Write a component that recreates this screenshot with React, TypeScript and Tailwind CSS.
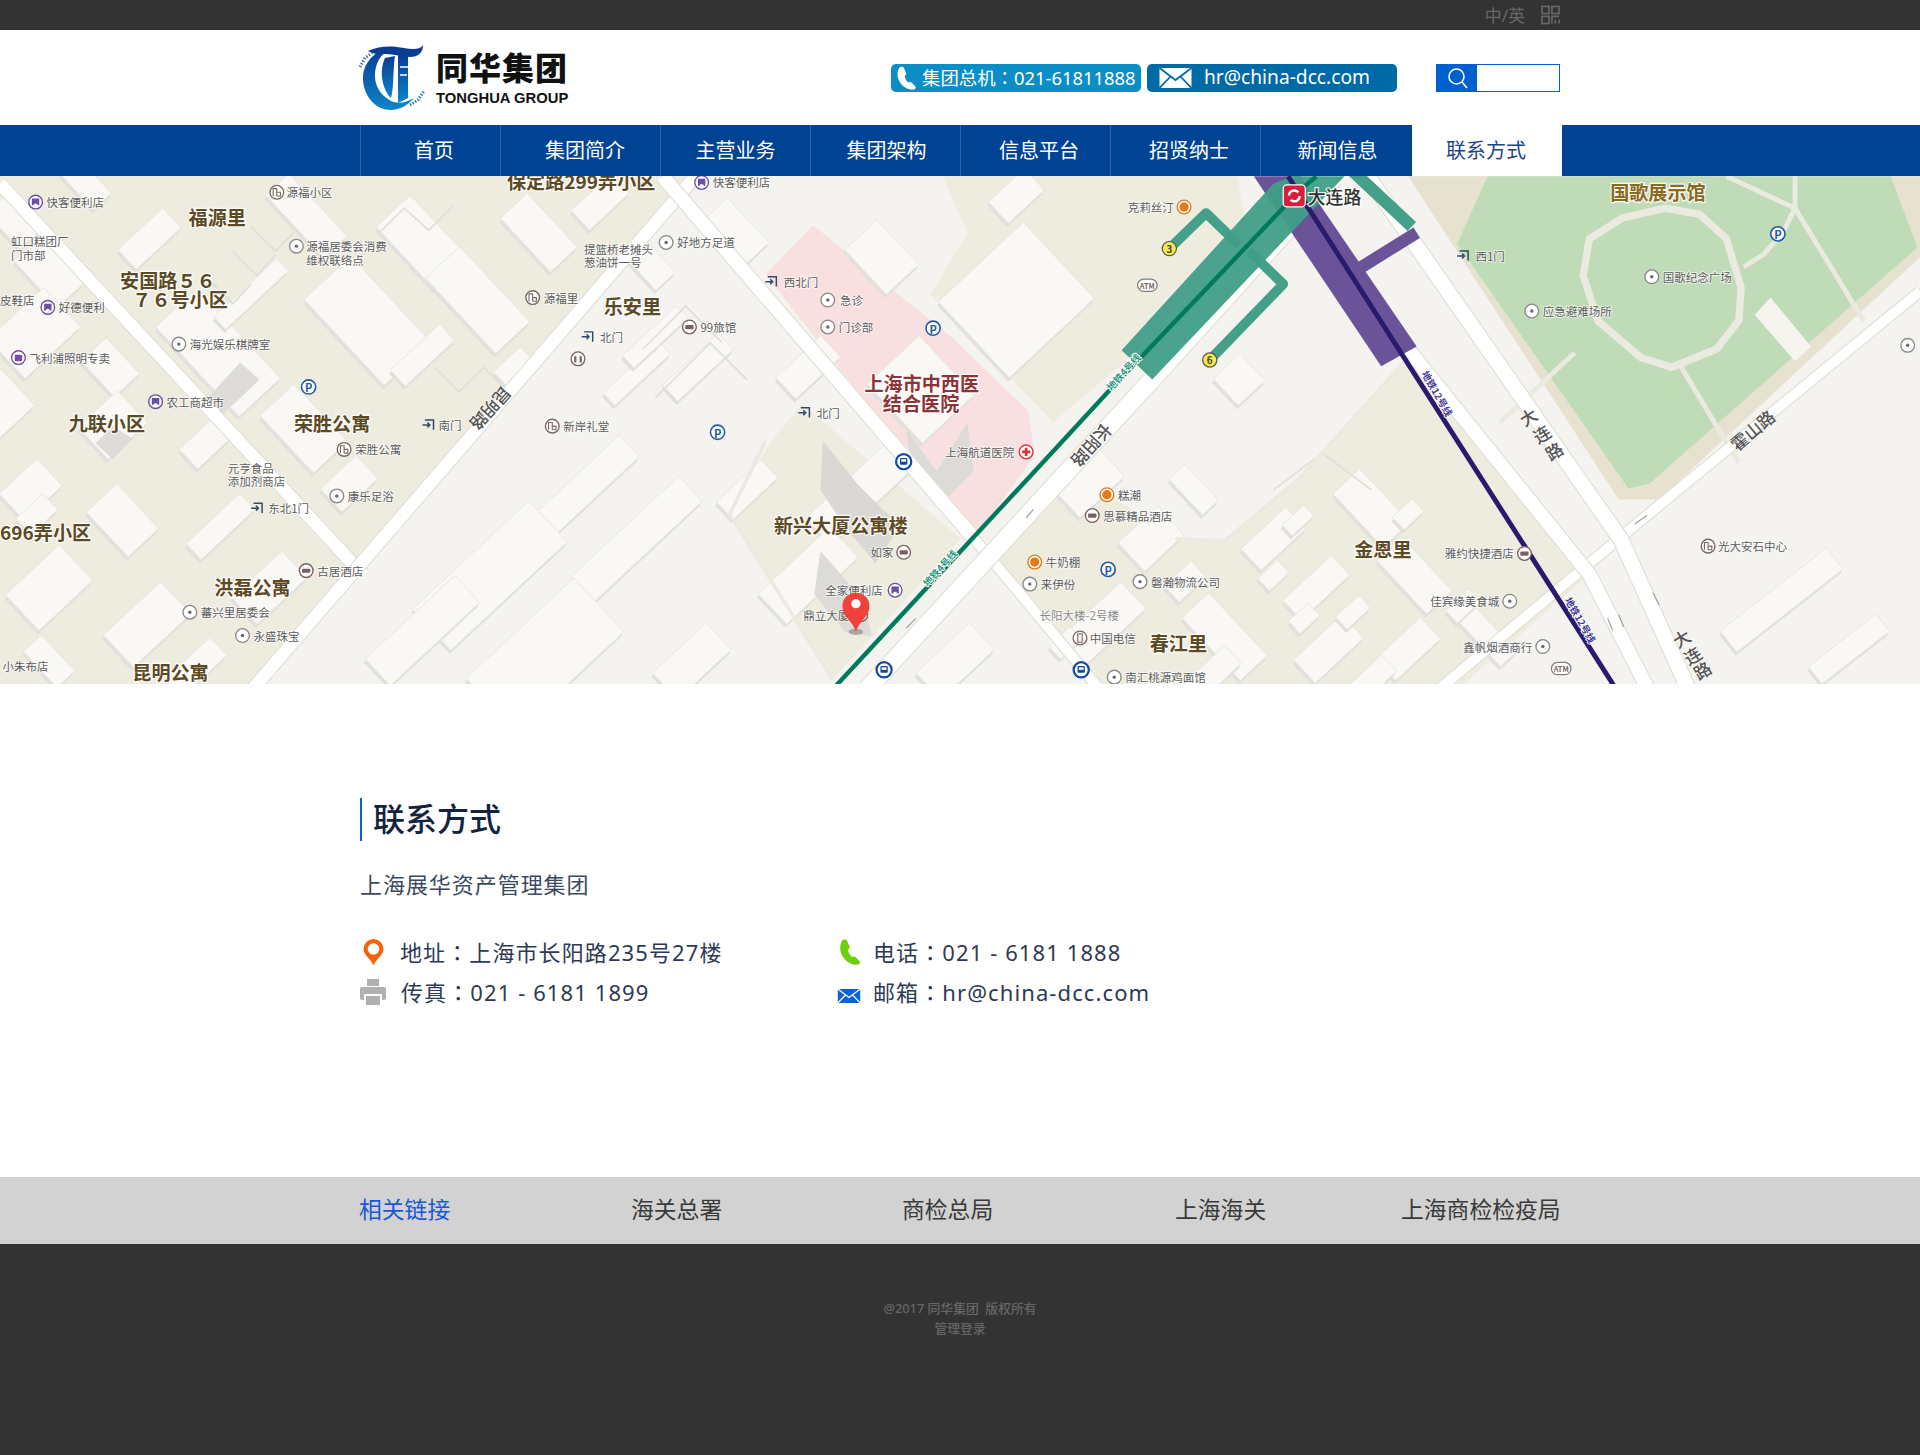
import React from "react";

type Pt = [number, number];
const poly = (p: Pt[]) => p.map((q) => q.join(",")).join(" ");

const tan: Pt[][] = [
  [[0, 143], [568, 144], [206, 563], [0, 563]],
  [[655, 330], [630, 360], [595, 420], [680, 555], [785, 440]],
  [[770, 144], [1010, 144], [1020, 190], [925, 290], [860, 345], [760, 240], [790, 190]],
  [[810, 450], [885, 390], [960, 440], [1000, 440], [1060, 390], [1150, 290], [1298, 469], [1190, 563], [905, 563]],
];

const buildings: [number, number, number, number, number][] = [
  [12, 180, 40, 26, 47], [40, 222, 52, 30, 47], [28, 272, 62, 44, -43], [0, 330, 40, 40, 47], [90, 300, 40, 28, 47],
  [178, 288, 100, 46, 47], [122, 195, 50, 22, -43], [70, 150, 40, 20, 47], [250, 176, 70, 26, 47], [205, 240, 70, 14, -43],
  [300, 262, 96, 52, 47], [345, 198, 70, 38, 47], [390, 245, 84, 38, 47], [440, 190, 60, 30, 47], [490, 165, 44, 22, -43],
  [345, 290, 55, 18, -43], [420, 300, 30, 18, -43], [248, 350, 64, 38, 47], [285, 395, 40, 26, -43], [170, 360, 44, 22, -43],
  [92, 347, 44, 36, -43], [25, 400, 42, 30, -43], [40, 480, 60, 40, -43], [100, 425, 50, 34, 47], [180, 430, 60, 18, -43],
  [220, 480, 56, 30, -43], [40, 540, 40, 20, 47], [160, 545, 50, 20, -43], [120, 510, 64, 36, -43], [600, 190, 50, 30, 47],
  [530, 215, 40, 22, 47], [520, 305, 62, 14, -43], [570, 300, 62, 18, -43], [535, 275, 60, 14, -43], [470, 405, 24, 120, 47],
  [520, 440, 28, 120, 47], [400, 470, 46, 130, 47], [345, 515, 30, 100, 47], [445, 535, 60, 120, 47], [565, 540, 60, 30, -43],
  [610, 400, 20, 50, 47], [30, 420, 30, 18, -43], [705, 400, 30, 100, 47], [660, 470, 34, 80, 47], [830, 245, 95, 85, -43],
  [720, 210, 50, 36, 47], [660, 300, 50, 24, -43], [752, 318, 58, 66, -43], [830, 160, 40, 24, -43], [1012, 310, 30, 30, -43],
  [890, 395, 30, 50, 47], [940, 440, 44, 32, -43], [1040, 440, 50, 24, -43], [1075, 480, 54, 22, -43], [1120, 415, 60, 30, 47],
  [1085, 530, 54, 26, -43], [1155, 470, 60, 28, 47], [1150, 530, 50, 24, -43], [900, 510, 30, 70, 47], [1000, 520, 70, 30, 47],
  [985, 555, 60, 20, -43], [1215, 520, 50, 18, 47], [780, 540, 60, 30, -43], [1455, 490, 22, 110, 52], [1510, 530, 18, 70, 52],
  [1040, 470, 22, 14, -43], [1065, 505, 22, 14, -43], [1105, 500, 26, 14, -43], [1120, 555, 40, 18, -43], [1060, 425, 24, 12, -43],
  [1150, 420, 22, 14, -43], [1195, 495, 26, 14, -43], [968, 475, 30, 18, -43], [975, 400, 40, 18, 47], [870, 525, 24, 14, -43],
];

const big: [string, number, number, string?, number?][] = [
  ["保定路299弄小区", 414, 147.5], ["福源里", 154, 177.5], ["安国路５６", 98, 228.5], ["７６号小区", 108, 244.5], ["乐安里", 493, 249.5],
  ["九联小区", 56, 345.5], ["荣胜公寓", 240, 345.5], ["696弄小区", 0, 434.5], ["洪磊公寓", 175, 479.5], ["昆明公寓", 108, 548.5],
  ["新兴大厦公寓楼", 632, 428.5], ["春江里", 939, 525.5], ["金恩里", 1106, 448.5], ["国歌展示馆", 1315, 156.5, "#8a6a1f"],
  ["上海市中西医", 706, 312.5, "#8c3338"], ["结合医院", 721, 329.5, "#8c3338"], ["大连路", 1068, 160, "#333333", 14.6],
];

type Kind = "dot" | "shop" | "home" | "hotel" | "cup" | "door" | "none" | "tel" | "red" | "bag" | "wc";
const pois: [string, number, number, Kind, number?][] = [
  ["快客便利店", 38, 165, "shop", 29], ["源福小区", 234, 157, "home", 226], ["虹口糕团厂", 9, 197, "none"], ["门市部", 9, 208, "none"],
  ["源福居委会消费", 250, 201, "dot", 242], ["维权联络点", 250, 212, "none"], ["提篮桥老摊头", 477, 203, "none"], ["葱油饼一号", 477, 214, "none"],
  ["好地方足道", 553, 198, "dot", 544], ["快客便利店", 582, 149, "shop", 573], ["皮鞋店", 0, 245, "none"], ["好德便利", 48, 251, "shop", 39],
  ["海光娱乐棋牌室", 155, 281, "dot", 146], ["飞利浦照明专卖", 24, 292, "bag", 15], ["农工商超市", 136, 328, "shop", 127], ["源福里", 444, 243, "home", 435],
  ["北门", 490, 275, "door", 480], ["南门", 358, 347, "door", 350], ["东北1门", 219, 415, "door", 210], ["新岸礼堂", 460, 348, "home", 451],
  ["荣胜公寓", 290, 367, "home", 281], ["元亨食品", 186, 382, "none"], ["添加剂商店", 186, 393, "none"], ["康乐足浴", 284, 405, "dot", 275],
  ["古居酒店", 259, 466, "hotel", 250], ["蕃兴里居委会", 164, 500, "dot", 155], ["永盛珠宝", 207, 519, "dot", 198], ["小朱布店", 2, 544, "none"],
  ["99旅馆", 572, 267, "hotel", 563], ["西北门", 640, 230, "door", 630], ["急诊", 686, 245, "dot", 676], ["门诊部", 685, 267, "dot", 676],
  ["北门", 667, 337, "door", 657], ["上海航道医院", 772, 369, "red", 838], ["克莉丝汀", 921, 169, "cup", 967], ["糕潮", 913, 404, "cup", 904],
  ["思慕精品酒店", 901, 421, "hotel", 892], ["牛奶棚", 854, 459, "cup", 845], ["来伊份", 850, 477, "dot", 841], ["磐瀚物流公司", 940, 475, "dot", 931],
  ["长阳大楼-2号楼", 849, 502, "none"], ["中国电信", 890, 521, "tel", 882], ["南汇桃源鸡面馆", 919, 553, "dot", 910], ["如家", 711, 451, "hotel", 738],
  ["全家便利店", 674, 482, "shop", 731], ["鼎立大厦", 656, 502, "hotel", 703], ["西1门", 1205, 209, "door", 1195], ["国歌纪念广场", 1358, 226, "dot", 1349],
  ["应急避难场所", 1260, 254, "dot", 1251], ["光大安石中心", 1403, 446, "home", 1395], ["雅约快捷酒店", 1180, 452, "hotel", 1245],
  ["佳宾缘美食城", 1168, 491, "dot", 1233], ["鑫帆烟酒商行", 1195, 528, "dot", 1260], ["", 0, 0, "wc", 472], ["", 0, 0, "dot", 1558],
];
const wcY = 293;
const edgeY = 282;

function PoiIcon({ k, x, y }: { k: Kind; x: number; y: number }) {
  if (k === "none") return null;
  if (k === "door")
    return (
      <g fill="none" stroke="#2f4a6b" strokeWidth="1.2">
        <path d={`M${x - 3} ${y - 4}H${x + 4}V${y + 4}`} />
        <path d={`M${x - 5} ${y}H${x + 1}M${x - 1} ${y - 2}L${x + 1} ${y}L${x - 1} ${y + 2}`} />
      </g>
    );
  const ring: Record<string, string> = { dot: "#8a8a8a", shop: "#6a4fa8", home: "#7a6660", hotel: "#7a5f5f", cup: "#e07b1a", tel: "#7a6660", red: "#d8343c", bag: "#7b4aa8", wc: "#7a6660" };
  const c = ring[k];
  return (
    <g>
      <circle cx={x} cy={y} r="5.6" fill="#ffffff" stroke={c} strokeWidth="1.1" />
      {k === "dot" && <circle cx={x} cy={y} r="1.4" fill="#6b6b6b" />}
      {k === "shop" && <path d={`M${x - 3} ${y - 3}H${x + 3}V${y + 3}L${x} ${y + 1}L${x - 3} ${y + 3}Z`} fill={c} />}
      {k === "home" && <path d={`M${x - 3} ${y + 3}V${y - 3}H${x}V${y + 3}M${x} ${y + 3}H${x + 3}V${y}H${x}`} fill="none" stroke={c} strokeWidth="0.9" />}
      {k === "hotel" && <rect x={x - 3.4} y={y - 1.6} width="6.8" height="3.4" fill={c} rx="0.8" />}
      {k === "cup" && <circle cx={x} cy={y} r="3.8" fill={c} />}
      {k === "tel" && <rect x={x - 1.8} y={y - 3.4} width="3.6" height="6.8" fill="none" stroke={c} strokeWidth="0.9" />}
      {k === "red" && <path d={`M${x - 3.4} ${y}H${x + 3.4}M${x} ${y - 3.4}V${y + 3.4}`} stroke={c} strokeWidth="2.2" />}
      {k === "bag" && <rect x={x - 3} y={y - 2.4} width="6" height="5.4" fill={c} rx="1" />}
      {k === "wc" && <path d={`M${x - 2.2} ${y - 2}V${y + 3}M${x + 2.2} ${y - 2}V${y + 3}`} stroke={c} strokeWidth="1.8" />}
    </g>
  );
}

function CityMap() {
  const road = (d: string, w: number, key: string) => (
    <g key={key} fill="none" strokeLinejoin="round">
      <path d={d} stroke="#e2e0d6" strokeWidth={w + 2} />
      <path d={d} stroke="#ffffff" strokeWidth={w} />
    </g>
  );
  return (
    <svg viewBox="0 143.7 1568 414.9" width="1920" height="508" className="block" fontFamily="'Noto Sans CJK SC', sans-serif">
      <rect x="0" y="143" width="1568" height="420" fill="#f4f3ef" />
      {tan.map((p, i) => (
        <polygon key={i} points={poly(p)} fill="#eeecdf" />
      ))}
      <polygon points="664,184 625,224 794,438 812,418 845,372 840,336 778,276" fill="#f8e0e1" />
      {/* park */}
      <polygon points="1150,144 1215,144 1568,144 1568,210 1355,408 1322,408" fill="#e6e2cf" />
      <polygon points="1215,144 1544,144 1566,202 1347,395 1330,399 1190,199" fill="#c0dbb7" />
      <g fill="none" stroke="#ebeae1" strokeWidth="6" strokeLinejoin="round">
        <path d="M1360 170 L1388 175 L1410 195 L1422 235 L1420 262 L1402 285 L1365 300 L1340 292 L1305 262 L1293 225 L1298 195 L1325 178 Z" />
        <path d="M1286 288 L1225 345" strokeWidth="4" />
        <path d="M1372 298 L1420 378" strokeWidth="4" />
        <path d="M1424 218 L1440 208 L1456 190 L1466 170 L1466 144" strokeWidth="4" />
        <path d="M1466 170 L1522 262" strokeWidth="4" />
        <path d="M1410 144 L1466 170" strokeWidth="4" />
      </g>
      <polygon points="1433,257 1446,243 1479,283 1466,295" fill="#f5f4ee" />
      {/* buildings */}
      {buildings.map(([x, y, w, h, a], i) => (
        <g key={i} transform={`translate(${x} ${y}) rotate(${a})`}>
          <rect x={-w / 2} y={-h / 2} width={w} height={h} fill="#e1e0dc" transform={`rotate(${-a}) translate(-1 3) rotate(${a})`} />
          <rect x={-w / 2} y={-h / 2} width={w} height={h} fill="#f9f8f5" stroke="#e7e6de" strokeWidth="0.7" />
        </g>
      ))}
      <polygon points="672,360 700,395 735,430 715,460 690,430 670,400" fill="#d9d8d5" />
      <polygon points="670,450 705,490 712,520 690,516 665,485" fill="#dcdbd7" />
      <polygon points="740,350 765,385 790,345 795,385 770,410 745,385" fill="#dcdbd7" />
      <polygon points="165,330 196,296 212,310 175,345" fill="#dddcd8" />
      <polygon points="78,362 92,375 108,358 92,348" fill="#dddcd8" />
      {/* comb outlines */}
      <g fill="none" stroke="#e0dfd5" strokeWidth="1.4">
        <path d="M172 230L190 248L205 232M190 205L210 225L225 208M205 185L225 205L240 190" />
        <path d="M310 190L330 170L350 188L370 168M355 300L375 320L395 300L415 320" />
        <path d="M525 285L560 250L590 280M535 325L580 280L610 310M1040 400L1080 370L1120 400" />
      </g>
      {/* roads */}
      {road("M0 150 L297 470", 10, "c")}
      {road("M206 563 L568 144", 10, "b")}
      {road("M541 144 L794 438", 11, "d1")}
      {road("M794 438 L898 563", 8, "d2")}
      {road("M708 563 L950 300 L1090 145", 14, "a")}
      {road("M1568 238 L1340 425 L1175 563", 8, "h")}
      {road("M1117 144 L1324 441 L1379 563", 12, "e1")}
      {road("M1149 284 L1298 469 L1346 563", 11, "e2")}
      <g fill="none" stroke="#ebe9e0" strokeWidth="3">
        <path d="M625 360 L596 420 L680 555" />
        <path d="M960 440 L1000 442 L1060 392 L1150 292" />
      </g>
      {/* metro stations */}
      <polygon points="1024,144 1062,144 1157,283 1128,299" fill="#6b5399" />
      <path d="M1112 218 L1157 190" stroke="#6b5399" strokeWidth="10" />
      <g fill="none" stroke="#44a088" strokeWidth="8" strokeLinejoin="round">
        <path d="M955 203 L985 174 L1012 200" />
        <path d="M988 294 L1048 232 L1020 205" />
        <path d="M1105 140 L1153 185" strokeWidth="10" />
      </g>
      <polygon points="916,286 1040,150 1055,144 1098,144 941,310" fill="#409e87" fillOpacity="0.95" />
      <path d="M680 563 L905 320 L1062 155 L1075 144" fill="none" stroke="#007a5c" strokeWidth="3.6" />
      <path d="M1052 144 L1320 563" fill="none" stroke="#2a1a6e" strokeWidth="4" />
      <g fontSize="8" fontWeight="700">
        <text transform="translate(920 306) rotate(-48)" textAnchor="middle" fill="#2c9a80" stroke="#fff" strokeWidth="1.5" paintOrder="stroke">地铁4号线</text>
        <text transform="translate(770 466) rotate(-48)" textAnchor="middle" fill="#2c9a80" stroke="#fff" strokeWidth="1.5" paintOrder="stroke">地铁4号线</text>
        <text transform="translate(1171 323) rotate(60)" textAnchor="middle" fill="#4a3a9a" stroke="#fff" strokeWidth="1.5" paintOrder="stroke">地铁12号线</text>
        <text transform="translate(1288 508) rotate(60)" textAnchor="middle" fill="#4a3a9a" stroke="#fff" strokeWidth="1.5" paintOrder="stroke">地铁12号线</text>
      </g>
      {/* road names */}
      <g fill="#555555" fontSize="14" fontWeight="500" stroke="#ffffff" strokeWidth="0.6" paintOrder="stroke">
        <text transform="translate(892 364) rotate(132)" textAnchor="middle" dominantBaseline="central">长阳路</text>
        <text transform="translate(401 334) rotate(132)" textAnchor="middle" dominantBaseline="central">昆明路</text>
        <text transform="translate(1431 351) rotate(-40)" textAnchor="middle" dominantBaseline="central">霍山路</text>
        <text transform="translate(1248 340) rotate(-32)" textAnchor="middle" dominantBaseline="central">大</text>
        <text transform="translate(1259 354) rotate(-32)" textAnchor="middle" dominantBaseline="central">连</text>
        <text transform="translate(1269 368) rotate(-32)" textAnchor="middle" dominantBaseline="central">路</text>
        <text transform="translate(1373 521) rotate(-32)" textAnchor="middle" dominantBaseline="central">大</text>
        <text transform="translate(1382 535) rotate(-32)" textAnchor="middle" dominantBaseline="central">连</text>
        <text transform="translate(1390 547) rotate(-32)" textAnchor="middle" dominantBaseline="central">路</text>
      </g>
      {/* small arrows */}
      <g stroke="#a0a0a0" strokeWidth="1" fill="none">
        <path d="M1335 428 L1345 421 M1350 484 L1355 494 M1313 505 L1317 515 M1322 502 L1326 512 M838 423 L844 416 M740 513 L748 505" />
      </g>
      {/* labels */}
      {pois.map(([t, x, y, k, ix], i) => (
        <g key={i}>
          {t && (
            <text x={x} y={y} dominantBaseline="central" fontSize="9.4" fill={t.startsWith("长阳") ? "#8a8a8a" : "#5c5c5c"} stroke="#ffffff" strokeWidth="1.4" strokeOpacity="0.7" paintOrder="stroke">
              {t}
            </text>
          )}
          {ix !== undefined && <PoiIcon k={k} x={ix} y={!t ? (k === "wc" ? wcY : edgeY) : y} />}
        </g>
      ))}
      {big.map(([t, x, y, c, s], i) => (
        <text key={i} x={x} y={y} dominantBaseline="central" fontSize={s ?? 15.6} fontWeight={s ? 500 : 700} fill={c ?? "#5c4a24"} stroke="#ffffff" strokeWidth="2" strokeOpacity="0.85" paintOrder="stroke">
          {t}
        </text>
      ))}
      {/* parking, bus, ATM, metro marks */}
      {([[252, 316], [586, 353], [762, 268], [905, 465], [1452, 191]] as Pt[]).map(([x, y], i) => (
        <g key={i}>
          <circle cx={x} cy={y} r="5.8" fill="#ffffff" stroke="#1e5aa8" strokeWidth="1.3" />
          <text x={x} y={y + 0.3} fontSize="9" fontWeight="700" textAnchor="middle" dominantBaseline="central" fill="#1e5aa8">P</text>
        </g>
      ))}
      {([[738, 377], [722, 547], [883, 547]] as Pt[]).map(([x, y], i) => (
        <g key={i}>
          <circle cx={x} cy={y} r="6.2" fill="#ffffff" stroke="#114a9e" strokeWidth="1.8" />
          <rect x={x - 3} y={y - 3} width="6" height="5.5" rx="1" fill="#114a9e" />
          <rect x={x - 2} y={y - 2} width="4" height="2" fill="#ffffff" />
        </g>
      ))}
      {([[937, 233], [1275, 546]] as Pt[]).map(([x, y], i) => (
        <g key={i}>
          <rect x={x - 8} y={y - 5} width="16" height="10" rx="5" fill="#ffffff" stroke="#8a7a78" strokeWidth="1" />
          <text x={x} y={y + 0.3} fontSize="6" fontWeight="700" textAnchor="middle" dominantBaseline="central" fill="#7a6660">ATM</text>
        </g>
      ))}
      {([[955, 203, "3"], [988, 294, "6"]] as [number, number, string][]).map(([x, y, t]) => (
        <g key={t}>
          <circle cx={x} cy={y} r="5.8" fill="#f4e94a" stroke="#555" strokeWidth="1" />
          <text x={x} y={y + 0.3} fontSize="8" fontWeight="700" textAnchor="middle" dominantBaseline="central" fill="#444">{t}</text>
        </g>
      ))}
      <rect x="1048" y="151" width="18" height="18" rx="3" fill="#d81e3a" stroke="#fff" strokeWidth="1" />
      <circle cx="1057" cy="160" r="4.4" fill="none" stroke="#fff" strokeWidth="2" strokeDasharray="10 3.8" />
      {/* pin */}
      <ellipse cx="699" cy="516" rx="6" ry="2.5" fill="#000" fillOpacity="0.25" />
      <path d="M699 516 C696 506 688 504 688 495 A11 11 0 0 1 710 495 C710 504 702 506 699 516 Z" fill="#f2413a" />
      <circle cx="699" cy="493" r="3.8" fill="#fff" />
    </svg>
  );
}

function Logo() {
  return (
    <svg width="70" height="68" viewBox="0 -1 70 68" className="-ml-[2px] block">
      <defs>
        <linearGradient id="lg" x1="0" y1="0" x2="0" y2="1">
          <stop offset="0" stopColor="#0b3c94" />
          <stop offset="1" stopColor="#0a86c9" />
        </linearGradient>
      </defs>
      <path d="M26 4C12 10 4 22 5 35C6 52 18 65 33 65C42 65 50 60 56 53C48 58 40 59 33 56C22 50 16 40 17 28C18 18 22 10 30 6Z" fill="url(#lg)" />
      <path d="M10 6C22 0 36 1 46 3C54 4.5 62 5 65 0C65 8 60 12 52 12C44 12 36 9 28 9C22 9 16 10 10 6Z" fill="#0b3c94" />
      <path d="M40 10L50 11V53L40 58Z" fill="url(#lg)" />
      <path d="M27 13C21 26 24 44 33 53C36 44 35 22 37 11Z" fill="url(#lg)" />
      <path d="M42 30H49M42 22H50" stroke="#fff" strokeWidth="1.6" />
      <path d="M2 22L7 13L14 8" fill="none" stroke="#2c6fb8" strokeWidth="3" strokeDasharray="1.4 1.6" />
      <path d="M52 60L60 55L66 46" fill="none" stroke="#1d7fc4" strokeWidth="3" strokeDasharray="1.4 1.6" />
    </svg>
  );
}

const Colon = () => <span className="font-['Noto_Sans_CJK_TC',sans-serif]">：</span>;

const Handset = ({ c, w, h }: { c: string; w: number; h: number }) => (
  <svg width={w} height={h} viewBox="0 0 26 27" className="block shrink-0">
    <path d="M5 1.5C6.5.2 9 .4 10 2L12.5 7.5C13 9 12.3 10 11 11C11 13.5 13 17 15 18.6C16.5 17.8 18 18 19 19L23 23C24 24.5 23 26 21 26.6C9 28-2 13 5 1.5Z" fill={c} />
  </svg>
);

const Envelope = ({ w, h, bg, line }: { w: number; h: number; bg: string; line: string }) => (
  <svg width={w} height={h} viewBox="0 0 32 20" className="block shrink-0">
    <rect width="32" height="20" fill={bg} />
    <path d="M0 0L16 12L32 0M0 20L11 8.5M32 20L21 8.5" fill="none" stroke={line} strokeWidth="1.8" />
  </svg>
);

const nav: [string, string][] = [
  ["首页", "w-[140px] pl-[7px]"],
  ["集团简介", "w-[160px] pl-[9px]"],
  ["主营业务", "w-[150px]"],
  ["集团架构", "w-[150px] pl-[2px]"],
  ["信息平台", "w-[150px] pl-[7px]"],
  ["招贤纳士", "w-[150px] pl-[7px]"],
  ["新闻信息", "w-[152px] pl-[2px]"],
];

export default function App() {
  return (
    <div className="w-[1920px] bg-white font-['Noto_Sans','Noto_Sans_CJK_SC',sans-serif]">
      <div className="h-[30px] bg-[#333333]">
        <div className="mx-auto flex h-full w-[1200px] items-center justify-end">
          <span className="text-[17px] leading-none text-[#666666]">中/英</span>
          <svg width="19" height="20" viewBox="0 0 20 20" className="ml-[16px] block" fill="none" stroke="#666666" strokeWidth="1.8">
            <rect x="1" y="1" width="7.5" height="7.5" />
            <rect x="11.5" y="1" width="7.5" height="7.5" />
            <rect x="1" y="11.5" width="7.5" height="7.5" />
            <path d="M11.5 19V11.5H19M15 15V19M19 15V19" />
          </svg>
        </div>
      </div>

      <div className="h-[95px]">
        <div className="mx-auto flex h-full w-[1200px] items-center">
          <div className="flex items-center">
            <Logo />
            <div className="ml-[8px] flex w-[132px] flex-col gap-[5px]">
              <span className="font-['Noto_Sans_CJK_SC',sans-serif] text-[32px] leading-[36px] font-black tracking-[1px] text-[#111111]">同华集团</span>
              <span className="font-['Liberation_Sans',sans-serif] text-[14.8px] leading-[18px] font-bold whitespace-nowrap text-[#111111]">TONGHUA GROUP</span>
            </div>
          </div>
          <div className="ml-[323px] flex h-[28px] w-[250px] items-center rounded-[5px] bg-[#0a8ec5] pl-[4px] text-[18.4px] whitespace-nowrap text-white">
            <Handset c="#ffffff" w={23} h={24} />
            <span className="ml-[4px]">集团总机<Colon />021-61811888</span>
          </div>
          <div className="ml-[6px] flex h-[28px] w-[250px] items-center rounded-[5px] bg-[#006aa6] pl-[12px] text-[19.2px] whitespace-nowrap text-white">
            <Envelope w={33} h={20} bg="#ffffff" line="#006aa6" />
            <span className="ml-[12px]">hr@china-dcc.com</span>
          </div>
          <div className="ml-[39px] flex h-[28px] w-[124px] border border-[#0060d0]">
            <div className="flex w-[40px] items-center justify-center bg-[#0060d0]">
              <svg width="21" height="22" viewBox="0 0 21 22" fill="none" stroke="#ffffff" strokeWidth="1.6">
                <circle cx="9.5" cy="9.5" r="7.5" />
                <path d="M15 15L20 21" />
              </svg>
            </div>
          </div>
        </div>
      </div>

      <div className="h-[51px] bg-[#004393]">
        <div className="mx-auto flex h-full w-[1202px] translate-x-px">
          {nav.map(([t, w]) => (
            <div key={t} className={`flex h-full items-center justify-center border-l border-[#2a64a8] text-[20px] text-white ${w}`}>
              {t}
            </div>
          ))}
          <div className="flex h-full w-[150px] items-center justify-center bg-white pr-[2px] text-[20px] text-[#1d4585]">联系方式</div>
        </div>
      </div>

      <CityMap />

      <div className="h-[493px]">
        <div className="mx-auto w-[1200px] pt-[114px]">
          <div className="flex h-[43px] items-center border-l-2 border-[#0a5fd8] pb-[5px] pl-[11px] font-['Noto_Sans_CJK_SC',sans-serif] text-[32px] font-medium text-[#14243f]">联系方式</div>
          <div className="mt-[24px] text-[22px] leading-[38px] tracking-[0.95px] text-[#3c4a60]">上海展华资产管理集团</div>
          <div className="mt-[32px] grid grid-cols-[477px_1fr] gap-y-[6px] text-[22px] leading-[33px] tracking-[1.1px] text-[#2d3a55]">
            <div className="flex items-center">
              <svg width="21" height="27" viewBox="0 0 21 27" className="ml-[3px] block shrink-0">
                <path fillRule="evenodd" d="M10.5 26.5C8 20 .5 16 .5 10A10 10 0 0 1 20.5 10C20.5 16 13 20 10.5 26.5ZM10.5 4.2A5.8 5.8 0 0 0 10.5 15.8A5.8 5.8 0 0 0 10.5 4.2Z" fill="#f2650a" />
              </svg>
              <span className="ml-[16px]">地址<Colon />上海市长阳路235号27楼</span>
            </div>
            <div className="flex items-center">
              <Handset c="#6fcf08" w={26} h={26} />
              <span className="ml-[10px]">电话<Colon />021 - 6181 1888</span>
            </div>
            <div className="flex items-center">
              <svg width="26" height="26" viewBox="0 0 26 26" className="block shrink-0" fill="#b0b0b0">
                <path d="M7 0H19V7H7Z" />
                <path fillRule="evenodd" d="M2 8H24Q26 8 26 10V19Q26 21 24 21H22V15H4V21H2Q0 21 0 19V10Q0 8 2 8Z" />
                <path d="M6 17H20V26H6Z" />
              </svg>
              <span className="ml-[15px]">传真<Colon />021 - 6181 1899</span>
            </div>
            <div className="flex items-center">
              <span className="mt-[8px]"><Envelope w={24} h={14} bg="#0a62d8" line="#ffffff" /></span>
              <span className="ml-[12px]">邮箱<Colon />hr@china-dcc.com</span>
            </div>
          </div>
        </div>
      </div>

      <div className="h-[67px] bg-[#d2d2d2]">
        <div className="mx-auto flex h-full w-[1202px] items-center text-[22.8px] text-[#3a3a3a]">
          <span className="w-[272px] text-[#1559d8]">相关链接</span>
          <span className="w-[271px]">海关总署</span>
          <span className="w-[273px]">商检总局</span>
          <span className="w-[226px]">上海海关</span>
          <span className="whitespace-nowrap">上海商检检疫局</span>
        </div>
      </div>

      <div className="h-[211px] bg-[#333333] pt-[54px] text-center text-[12.8px] leading-[20px] font-medium text-[#666666]">
        <div>@2017 同华集团&nbsp;&nbsp;版权所有</div>
        <div>管理登录</div>
      </div>
    </div>
  );
}
